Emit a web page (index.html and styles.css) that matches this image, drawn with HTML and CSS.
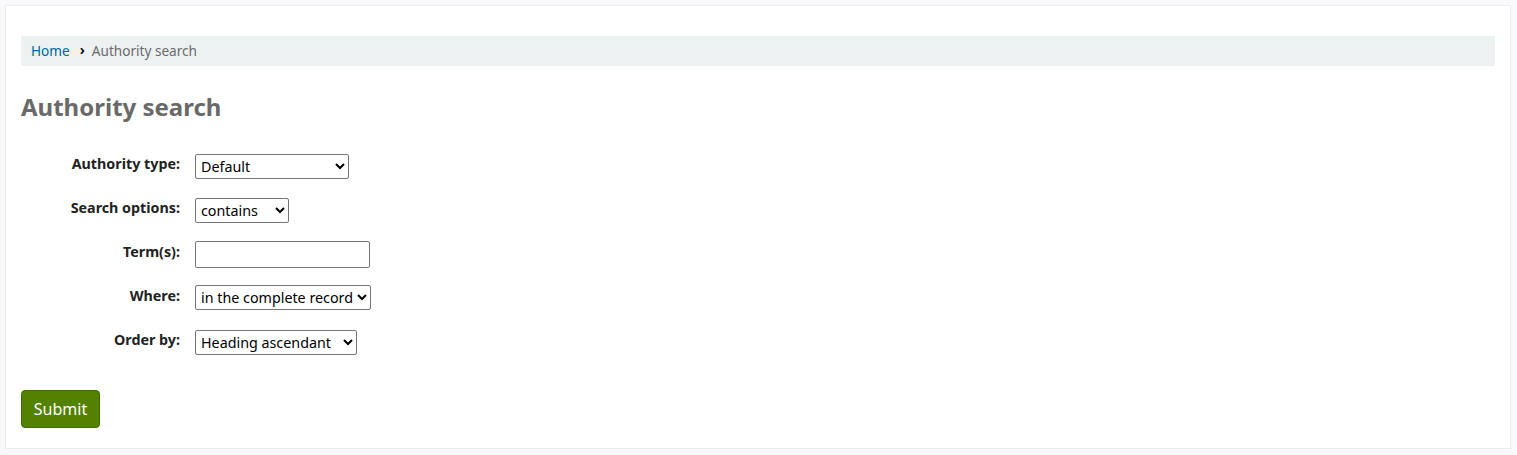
FILE: index.html
```html
<!DOCTYPE html>
<html>
<head>
<meta charset="utf-8">
<link rel="stylesheet" href="styles.css">
</head>
<body>
<main class="card">
  <nav class="breadcrumb">
    <a href="#" class="crumb-link">Home</a>
    <span class="sep">&#x203A;</span>
    <span class="crumb-current">Authority search</span>
  </nav>
  <h1 class="title">Authority search</h1>
  <form class="form">
    <div class="rows">
      <div class="row">
        <label class="lbl">Authority type:</label>
        <select class="sel sel-type"><option>Default</option></select>
      </div>
      <div class="row">
        <label class="lbl">Search options:</label>
        <select class="sel sel-opt"><option>contains</option></select>
      </div>
      <div class="row">
        <label class="lbl">Term(s):</label>
        <input class="txt" type="text">
      </div>
      <div class="row">
        <label class="lbl">Where:</label>
        <select class="sel sel-where"><option>in the complete record</option></select>
      </div>
      <div class="row">
        <label class="lbl">Order by:</label>
        <select class="sel sel-order"><option>Heading ascendant</option></select>
      </div>
    </div>
    <button type="button" class="btn">Submit</button>
  </form>
</main>
</body>
</html>
```
FILE: styles.css
```css
html, body {
  margin: 0;
  padding: 0;
}
body {
  background: #f9f8fb;
  font-family: "Noto Sans", "Open Sans", sans-serif;
  color: #333;
  padding: 5px 6px 6px 5px;
  height: 455px;
  box-sizing: border-box;
}
.card {
  background: #fff;
  border: 1px solid #ececf0;
  height: 444px;
  box-sizing: border-box;
  padding: 30px 15px 0 15px;
}
.breadcrumb {
  background: #edf1f1;
  height: 30px;
  display: flex;
  align-items: center;
  padding-left: 10px;
  font-size: 13.6px;
  line-height: 18px;
  padding-bottom: 1px;
  box-sizing: border-box;
}
.crumb-link {
  color: #00659c;
  text-decoration: none;
}
.sep {
  color: #111;
  font-weight: bold;
  margin: 0 7px 0 10px;
  font-size: 14px;
  position: relative;
  top: -1px;
}
.crumb-current {
  color: #6b6b6b;
}
.title {
  margin: 26px 0 0 0;
  font-size: 24px;
  font-weight: bold;
  color: #696969;
  line-height: 30px;
}
.form {
  margin-top: 32px;
}
.rows {
  display: flex;
  flex-direction: column;
}
.row {
  display: flex;
  align-items: flex-start;
  height: 44px;
}
.lbl {
  width: 159px;
  text-align: right;
  font-weight: bold;
  font-size: 14.3px;
  line-height: 19px;
  color: #222;
  padding-top: 0;
  margin-right: 15px;
}
.sel {
  font-family: "Noto Sans", "Open Sans", sans-serif;
  font-size: 14.3px;
  height: 25px;
  border: 1px solid #767676;
  border-radius: 2px;
  background: #fff;
  color: #000;
  padding: 0 0 0 1px;
}
.sel-type { width: 154px; }
.sel-opt { width: 94px; }
.sel-where { width: 176px; margin-top: -1px; }
.sel-order { width: 162px; }
.txt {
  width: 175px;
  height: 27px;
  box-sizing: border-box;
  border: 1px solid #767676;
  border-radius: 2px;
  margin-top: -1px;
}
.btn {
  margin-top: 16px;
  background: #538200;
  border: 1px solid #3e6a00;
  border-radius: 4px;
  color: #fff;
  font-family: "Noto Sans", "Open Sans", sans-serif;
  font-size: 16px;
  width: 79px;
  height: 38px;
  padding: 0;
}
```
